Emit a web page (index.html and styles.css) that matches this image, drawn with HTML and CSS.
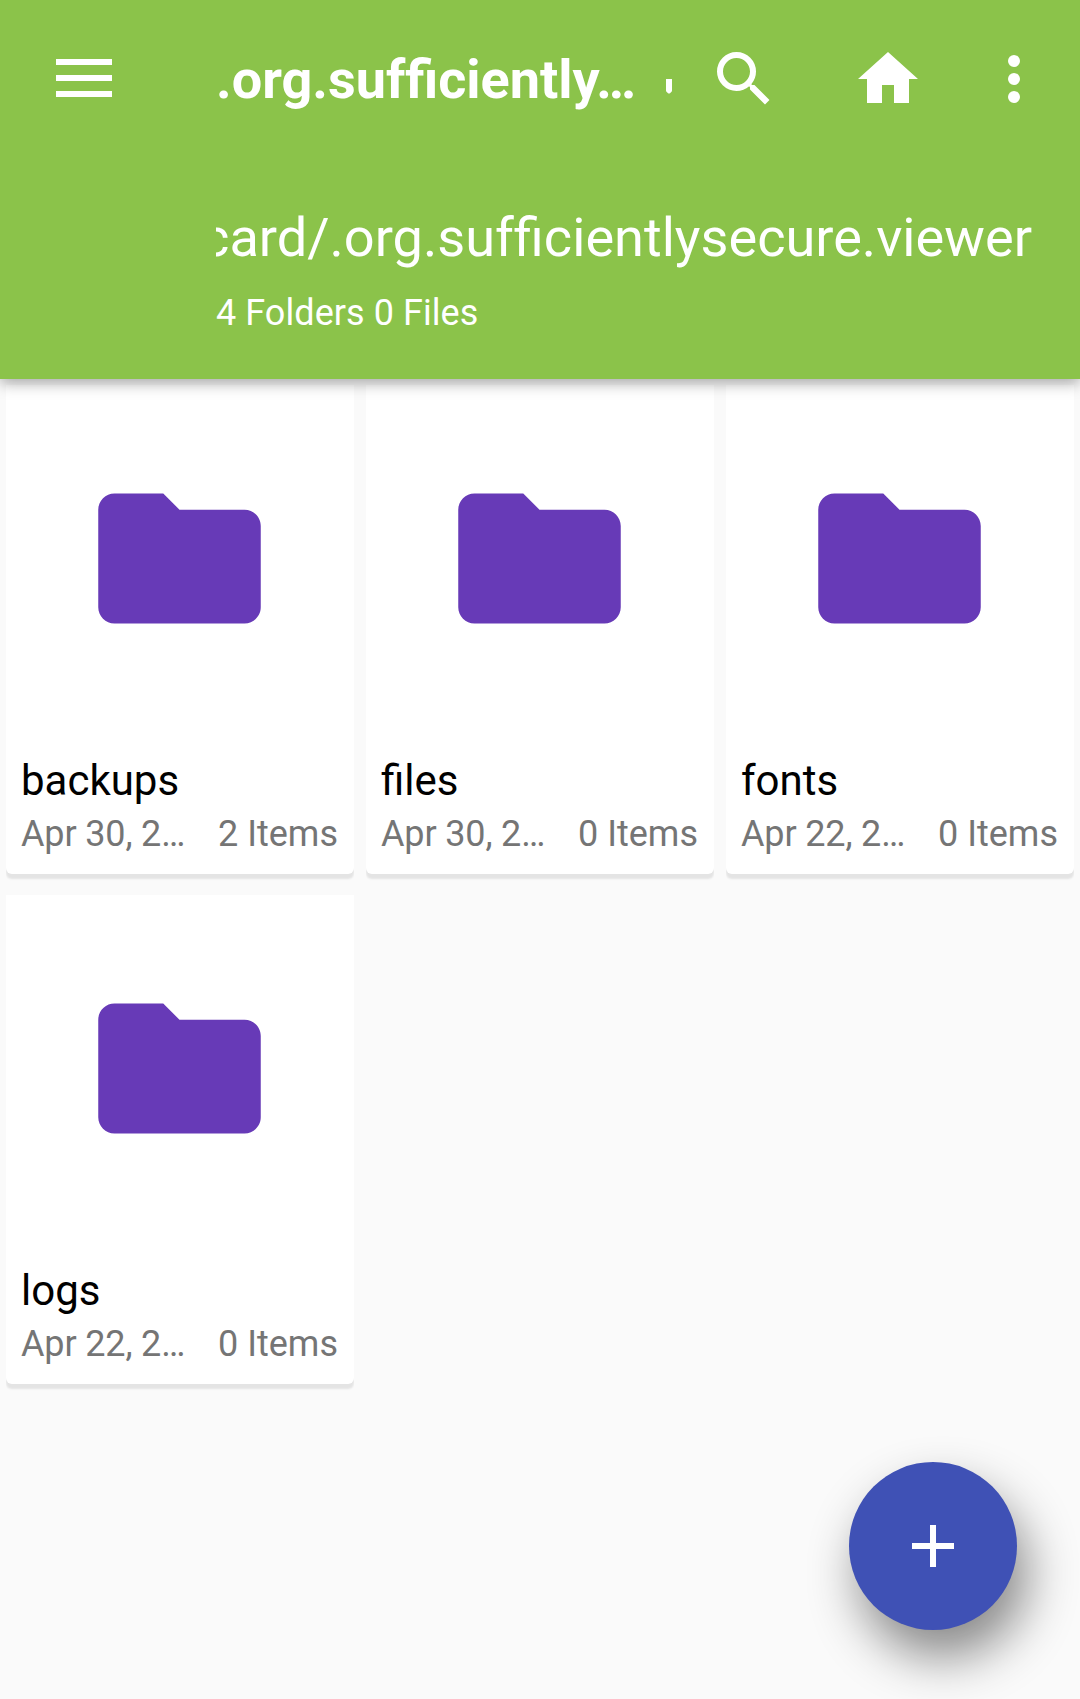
FILE: index.html
```html
<!DOCTYPE html>
<html lang="en">
<head>
<meta charset="utf-8">
<title>File manager</title>
<link rel="stylesheet" href="styles.css">
</head>
<body>
<header class="appbar">
  <div class="toolbar">
    <svg class="menu" viewBox="0 0 56 38"><path d="M0 0h56v6H0zM0 16h56v6H0zM0 32h56v6H0z"/></svg>
    <h1 class="title">.org.suf&zwnj;ficiently…</h1>
    <svg class="tick" viewBox="0 0 6 15"><path d="M0 0h6v11.5q0 1-1 1.8L4 14.2q-1 .6-2 0L1 13.3q-1-.8-1-1.8z"/></svg>
    <nav class="actions">
      <svg class="icon search" viewBox="0 0 24 24"><path d="M15.500 14h-.79l-.28-.27A6.470 6.470 0 0 0 16 9.500 6.500 6.500 0 1 0 9.500 16c1.610 0 3.090-.59 4.230-1.570l.27.28v.79l5 4.990L20.490 19l-4.990-5zm-6 0C7.010 14 5 11.990 5 9.500S7.010 5 9.500 5 14 7.010 14 9.500 11.990 14 9.500 14z"/></svg>
      <svg class="icon home" viewBox="0 0 24 24"><path d="M10 20v-6h4v6h5v-8h3L12 3 2 12h3v8z"/></svg>
      <svg class="icon more" viewBox="0 0 24 24"><circle cx="12" cy="6" r="2"/><circle cx="12" cy="12" r="2"/><circle cx="12" cy="18" r="2"/></svg>
    </nav>
  </div>
  <div class="location">
    <div class="path"><span>/sdcard/.org.suf&zwnj;ficientlysecure.viewer</span></div>
    <div class="summary">4 Folders 0 Files</div>
  </div>
</header>
<main class="grid">
  <article class="card">
    <div class="thumb"><svg class="folder" viewBox="0 0 24 24"><path d="M10 4H4c-1.100 0-2 .9-2 2v12c0 1.100.9 2 2 2h16c1.100 0 2-.9 2-2V8c0-1.100-.9-2-2-2h-8z"/></svg></div>
    <div class="name">backups</div>
    <div class="meta"><span class="date">Apr 30, 2…</span><span>2 Items</span></div>
  </article>
  <article class="card">
    <div class="thumb"><svg class="folder" viewBox="0 0 24 24"><path d="M10 4H4c-1.100 0-2 .9-2 2v12c0 1.100.9 2 2 2h16c1.100 0 2-.9 2-2V8c0-1.100-.9-2-2-2h-8z"/></svg></div>
    <div class="name">files</div>
    <div class="meta"><span class="date">Apr 30, 2…</span><span>0 Items</span></div>
  </article>
  <article class="card">
    <div class="thumb"><svg class="folder" viewBox="0 0 24 24"><path d="M10 4H4c-1.100 0-2 .9-2 2v12c0 1.100.9 2 2 2h16c1.100 0 2-.9 2-2V8c0-1.100-.9-2-2-2h-8z"/></svg></div>
    <div class="name">fonts</div>
    <div class="meta"><span class="date">Apr 22, 2…</span><span>0 Items</span></div>
  </article>
  <article class="card">
    <div class="thumb"><svg class="folder" viewBox="0 0 24 24"><path d="M10 4H4c-1.100 0-2 .9-2 2v12c0 1.100.9 2 2 2h16c1.100 0 2-.9 2-2V8c0-1.100-.9-2-2-2h-8z"/></svg></div>
    <div class="name">logs</div>
    <div class="meta"><span class="date">Apr 22, 2…</span><span>0 Items</span></div>
  </article>
</main>
<button class="fab" aria-label="Add"><svg viewBox="0 0 42 42"><path d="M18 0h6v18h18v6H24v18h-6V24H0v-6h18z"/></svg></button>
</body>
</html>
```
FILE: styles.css
```css
* { box-sizing: border-box; }
body {
  margin: 0;
  position: relative;
  height: 1699px;
  overflow: hidden;
  background: #fafafa;
  font-family: Roboto, "Noto Sans", sans-serif;
  color: #000;
}
svg { display: block; flex: none; }

.appbar {
  position: relative;
  z-index: 1;
  height: 379px;
  background: #8bc34a;
  color: #fff;
  fill: #fff;
  box-shadow: 0 4px 14px rgba(0, 0, 0, .34);
}
.toolbar {
  display: flex;
  align-items: center;
  height: 158px;
  padding: 0 30px 0 56px;
}
.menu { width: 56px; height: 38px; margin-top: -2px; }
.title {
  flex: none;
  width: 450px;
  margin: 2px 0 0 104px;
  font-size: 54px;
  font-weight: 700;
  line-height: 64px;
  white-space: nowrap;
}
.tick { width: 6px; height: 15px; margin-top: 14px; }
.actions { display: flex; margin-left: auto; }
.icon { width: 72px; height: 72px; }
.home { margin-left: 72px; }
.more { margin-left: 54px; }

.location { padding: 48px 48px 0 216px; }
.path {
  display: flex;
  justify-content: flex-end;
  overflow: hidden;
  font-size: 54.15px;
  line-height: 64px;
  white-space: nowrap;
}
.summary {
  margin-top: 22px;
  font-size: 36px;
  line-height: 42px;
  letter-spacing: .06px;
}

.grid {
  display: grid;
  grid-template-columns: repeat(3, 348px);
  gap: 21px 12px;
  padding: 6px;
}
.card {
  height: 489px;
  padding: 0 16px 0 15px;
  background: #fff;
  border-radius: 0 0 6px 6px;
  box-shadow: 0 5px 2px #e4e4e4;
  clip-path: inset(0 0 -10px 0);
}
.thumb {
  display: flex;
  height: 371px;
  padding: 76px 0 0 61px;
}
.folder { width: 195px; height: 195px; fill: #673ab7; }
.name { font-size: 42px; line-height: 50px; }
.meta {
  display: flex;
  justify-content: space-between;
  margin-top: 7px;
  font-size: 36px;
  line-height: 42px;
  color: #757575;
}
.date { letter-spacing: -.15px; }

.fab {
  position: absolute;
  left: 849px;
  top: 1462px;
  display: grid;
  place-items: center;
  width: 168px;
  height: 168px;
  padding: 0;
  border: 0;
  border-radius: 50%;
  background: #3f51b5;
  fill: #fff;
  box-shadow: 10px 27px 50px rgba(0, 0, 0, .46);
}
.fab svg { width: 42px; height: 42px; }
```
